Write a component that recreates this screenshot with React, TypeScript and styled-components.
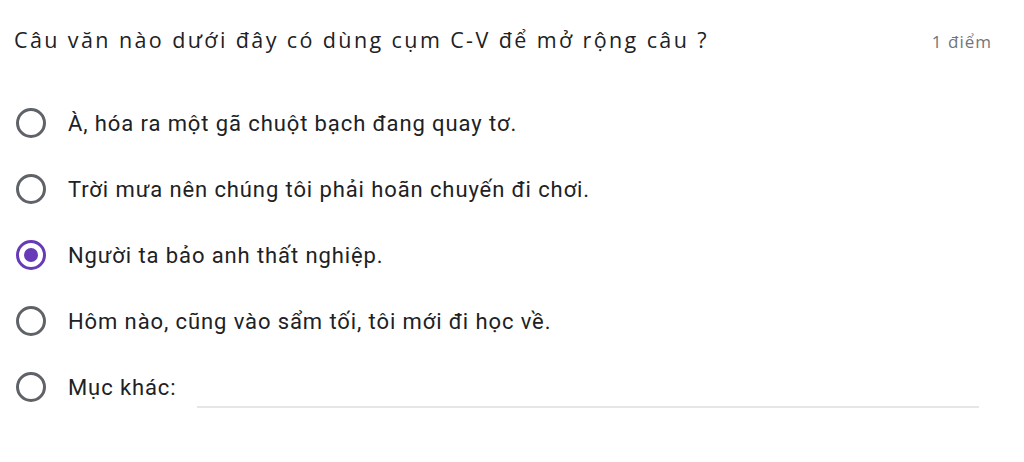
import React from "react";
import styled, { createGlobalStyle } from "styled-components";

const Global = createGlobalStyle`
  html, body { margin: 0; padding: 0; background: #ffffff; }
  body { width: 1024px; height: 462px; overflow: hidden; }
`;

const Card = styled.div`
  display: flex;
  flex-direction: column;
  padding: 0 32px 0 14px;
`;

const Header = styled.div`
  display: flex;
  align-items: baseline;
  justify-content: space-between;
  padding-top: 25px;
  height: 66px;
  box-sizing: border-box;
`;

const Title = styled.div`
  font-family: "Open Sans", "Noto Sans", sans-serif;
  font-size: 21.5px;
  color: #202124;
  letter-spacing: 2.4px;
`;

const Points = styled.div`
  font-family: "Open Sans", "Noto Sans", sans-serif;
  font-size: 17px;
  color: #70757a;
  letter-spacing: 1px;
`;

const Options = styled.div`
  display: flex;
  flex-direction: column;
  margin-top: 24px;
`;

const Row = styled.label`
  display: flex;
  align-items: center;
  height: 66px;
  padding-left: 2px;
`;

const Radio = styled.span<{ $checked?: boolean }>`
  width: 30px;
  height: 30px;
  box-sizing: border-box;
  border-radius: 50%;
  border: 3px solid ${(p) => (p.$checked ? "#673ab7" : "#5f6368")};
  display: flex;
  align-items: center;
  justify-content: center;
  flex-shrink: 0;
  &::after {
    content: "";
    display: ${(p) => (p.$checked ? "block" : "none")};
    width: 14px;
    height: 14px;
    border-radius: 50%;
    background: #673ab7;
  }
`;

const Text = styled.span`
  font-family: Roboto, "Liberation Sans", sans-serif;
  font-size: 22px;
  color: #202124;
  margin-left: 22px;
  letter-spacing: 0.9px;
`;

const OtherInput = styled.span`
  flex: 1;
  align-self: stretch;
  margin-left: 20px;
  margin-right: 13px;
  border-bottom: 2px solid #e6e6e6;
  margin-bottom: 12px;
`;

const options = [
  "À, hóa ra một gã chuột bạch đang quay tơ.",
  "Trời mưa nên chúng tôi phải hoãn chuyến đi chơi.",
  "Người ta bảo anh thất nghiệp.",
  "Hôm nào, cũng vào sẩm tối, tôi mới đi học về.",
];

export default function App() {
  return (
    <>
      <Global />
      <Card>
        <Header>
          <Title>Câu văn nào dưới đây có dùng cụm C-V để mở rộng câu ?</Title>
          <Points>1 điểm</Points>
        </Header>
        <Options>
          {options.map((o, i) => (
            <Row key={i}>
              <Radio $checked={i === 2} />
              <Text>{o}</Text>
            </Row>
          ))}
          <Row>
            <Radio />
            <Text>Mục khác:</Text>
            <OtherInput />
          </Row>
        </Options>
      </Card>
    </>
  );
}
